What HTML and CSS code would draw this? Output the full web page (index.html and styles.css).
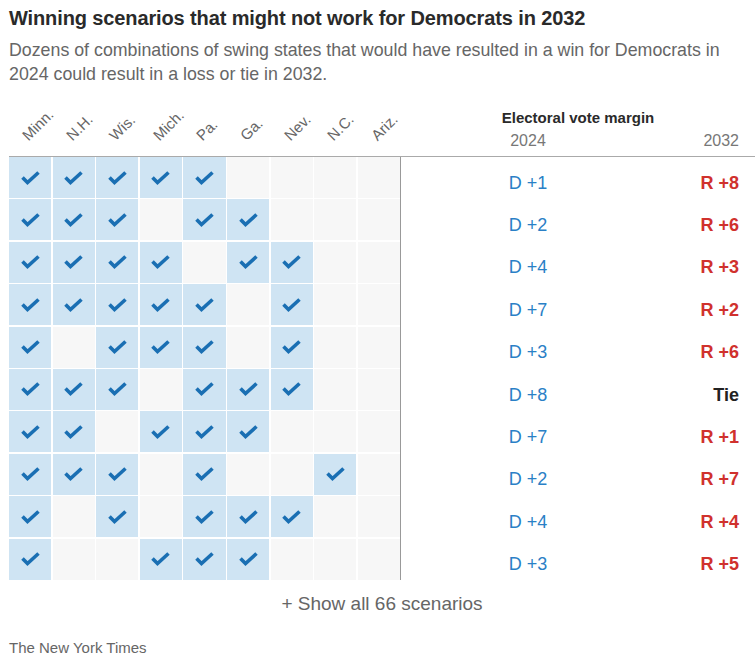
FILE: index.html
```html
<!DOCTYPE html>
<html lang="en">
<head>
<meta charset="utf-8">
<title>Winning scenarios</title>
<link rel="stylesheet" href="styles.css">
</head>
<body>
<div class="page">
  <h1 class="title">Winning scenarios that might not work for Democrats in 2032</h1>
  <p class="dek">Dozens of combinations of swing states that would have resulted in a win for Democrats in 2024 could result in a loss or tie in 2032.</p>

  <div class="chart">
    <div class="head">
      <div class="states">
        <div class="st"><span>Minn.</span></div>
        <div class="st"><span>N.H.</span></div>
        <div class="st"><span>Wis.</span></div>
        <div class="st"><span>Mich.</span></div>
        <div class="st"><span>Pa.</span></div>
        <div class="st"><span>Ga.</span></div>
        <div class="st"><span>Nev.</span></div>
        <div class="st"><span>N.C.</span></div>
        <div class="st"><span>Ariz.</span></div>
      </div>
      <div class="margin-head">
        <div class="mh-title">Electoral vote margin</div>
        <div class="years"><span class="y24">2024</span><span class="y32">2032</span></div>
      </div>
    </div>

    <div class="row">
      <div class="cells">
        <div class="c on"><svg viewBox="0 0 19 14"><path d="M1.5 6.5 L6.5 11.5 L17.5 1.5"/></svg></div>
        <div class="c on"><svg viewBox="0 0 19 14"><path d="M1.5 6.5 L6.5 11.5 L17.5 1.5"/></svg></div>
        <div class="c on"><svg viewBox="0 0 19 14"><path d="M1.5 6.5 L6.5 11.5 L17.5 1.5"/></svg></div>
        <div class="c on"><svg viewBox="0 0 19 14"><path d="M1.5 6.5 L6.5 11.5 L17.5 1.5"/></svg></div>
        <div class="c on"><svg viewBox="0 0 19 14"><path d="M1.5 6.5 L6.5 11.5 L17.5 1.5"/></svg></div>
        <div class="c"></div><div class="c"></div><div class="c"></div><div class="c"></div>
      </div>
      <div class="vals"><span class="d">D +1</span><span class="r">R +8</span></div>
    </div>

    <div class="row">
      <div class="cells">
        <div class="c on"><svg viewBox="0 0 19 14"><path d="M1.5 6.5 L6.5 11.5 L17.5 1.5"/></svg></div>
        <div class="c on"><svg viewBox="0 0 19 14"><path d="M1.5 6.5 L6.5 11.5 L17.5 1.5"/></svg></div>
        <div class="c on"><svg viewBox="0 0 19 14"><path d="M1.5 6.5 L6.5 11.5 L17.5 1.5"/></svg></div>
        <div class="c"></div>
        <div class="c on"><svg viewBox="0 0 19 14"><path d="M1.5 6.5 L6.5 11.5 L17.5 1.5"/></svg></div>
        <div class="c on"><svg viewBox="0 0 19 14"><path d="M1.5 6.5 L6.5 11.5 L17.5 1.5"/></svg></div>
        <div class="c"></div><div class="c"></div><div class="c"></div>
      </div>
      <div class="vals"><span class="d">D +2</span><span class="r">R +6</span></div>
    </div>

    <div class="row">
      <div class="cells">
        <div class="c on"><svg viewBox="0 0 19 14"><path d="M1.5 6.5 L6.5 11.5 L17.5 1.5"/></svg></div>
        <div class="c on"><svg viewBox="0 0 19 14"><path d="M1.5 6.5 L6.5 11.5 L17.5 1.5"/></svg></div>
        <div class="c on"><svg viewBox="0 0 19 14"><path d="M1.5 6.5 L6.5 11.5 L17.5 1.5"/></svg></div>
        <div class="c on"><svg viewBox="0 0 19 14"><path d="M1.5 6.5 L6.5 11.5 L17.5 1.5"/></svg></div>
        <div class="c"></div>
        <div class="c on"><svg viewBox="0 0 19 14"><path d="M1.5 6.5 L6.5 11.5 L17.5 1.5"/></svg></div>
        <div class="c on"><svg viewBox="0 0 19 14"><path d="M1.5 6.5 L6.5 11.5 L17.5 1.5"/></svg></div>
        <div class="c"></div><div class="c"></div>
      </div>
      <div class="vals"><span class="d">D +4</span><span class="r">R +3</span></div>
    </div>

    <div class="row">
      <div class="cells">
        <div class="c on"><svg viewBox="0 0 19 14"><path d="M1.5 6.5 L6.5 11.5 L17.5 1.5"/></svg></div>
        <div class="c on"><svg viewBox="0 0 19 14"><path d="M1.5 6.5 L6.5 11.5 L17.5 1.5"/></svg></div>
        <div class="c on"><svg viewBox="0 0 19 14"><path d="M1.5 6.5 L6.5 11.5 L17.5 1.5"/></svg></div>
        <div class="c on"><svg viewBox="0 0 19 14"><path d="M1.5 6.5 L6.5 11.5 L17.5 1.5"/></svg></div>
        <div class="c on"><svg viewBox="0 0 19 14"><path d="M1.5 6.5 L6.5 11.5 L17.5 1.5"/></svg></div>
        <div class="c"></div>
        <div class="c on"><svg viewBox="0 0 19 14"><path d="M1.5 6.5 L6.5 11.5 L17.5 1.5"/></svg></div>
        <div class="c"></div><div class="c"></div>
      </div>
      <div class="vals"><span class="d">D +7</span><span class="r">R +2</span></div>
    </div>

    <div class="row">
      <div class="cells">
        <div class="c on"><svg viewBox="0 0 19 14"><path d="M1.5 6.5 L6.5 11.5 L17.5 1.5"/></svg></div>
        <div class="c"></div>
        <div class="c on"><svg viewBox="0 0 19 14"><path d="M1.5 6.5 L6.5 11.5 L17.5 1.5"/></svg></div>
        <div class="c on"><svg viewBox="0 0 19 14"><path d="M1.5 6.5 L6.5 11.5 L17.5 1.5"/></svg></div>
        <div class="c on"><svg viewBox="0 0 19 14"><path d="M1.5 6.5 L6.5 11.5 L17.5 1.5"/></svg></div>
        <div class="c"></div>
        <div class="c on"><svg viewBox="0 0 19 14"><path d="M1.5 6.5 L6.5 11.5 L17.5 1.5"/></svg></div>
        <div class="c"></div><div class="c"></div>
      </div>
      <div class="vals"><span class="d">D +3</span><span class="r">R +6</span></div>
    </div>

    <div class="row">
      <div class="cells">
        <div class="c on"><svg viewBox="0 0 19 14"><path d="M1.5 6.5 L6.5 11.5 L17.5 1.5"/></svg></div>
        <div class="c on"><svg viewBox="0 0 19 14"><path d="M1.5 6.5 L6.5 11.5 L17.5 1.5"/></svg></div>
        <div class="c on"><svg viewBox="0 0 19 14"><path d="M1.5 6.5 L6.5 11.5 L17.5 1.5"/></svg></div>
        <div class="c"></div>
        <div class="c on"><svg viewBox="0 0 19 14"><path d="M1.5 6.5 L6.5 11.5 L17.5 1.5"/></svg></div>
        <div class="c on"><svg viewBox="0 0 19 14"><path d="M1.5 6.5 L6.5 11.5 L17.5 1.5"/></svg></div>
        <div class="c on"><svg viewBox="0 0 19 14"><path d="M1.5 6.5 L6.5 11.5 L17.5 1.5"/></svg></div>
        <div class="c"></div><div class="c"></div>
      </div>
      <div class="vals"><span class="d">D +8</span><span class="tie">Tie</span></div>
    </div>

    <div class="row">
      <div class="cells">
        <div class="c on"><svg viewBox="0 0 19 14"><path d="M1.5 6.5 L6.5 11.5 L17.5 1.5"/></svg></div>
        <div class="c on"><svg viewBox="0 0 19 14"><path d="M1.5 6.5 L6.5 11.5 L17.5 1.5"/></svg></div>
        <div class="c"></div>
        <div class="c on"><svg viewBox="0 0 19 14"><path d="M1.5 6.5 L6.5 11.5 L17.5 1.5"/></svg></div>
        <div class="c on"><svg viewBox="0 0 19 14"><path d="M1.5 6.5 L6.5 11.5 L17.5 1.5"/></svg></div>
        <div class="c on"><svg viewBox="0 0 19 14"><path d="M1.5 6.5 L6.5 11.5 L17.5 1.5"/></svg></div>
        <div class="c"></div><div class="c"></div><div class="c"></div>
      </div>
      <div class="vals"><span class="d">D +7</span><span class="r">R +1</span></div>
    </div>

    <div class="row">
      <div class="cells">
        <div class="c on"><svg viewBox="0 0 19 14"><path d="M1.5 6.5 L6.5 11.5 L17.5 1.5"/></svg></div>
        <div class="c on"><svg viewBox="0 0 19 14"><path d="M1.5 6.5 L6.5 11.5 L17.5 1.5"/></svg></div>
        <div class="c on"><svg viewBox="0 0 19 14"><path d="M1.5 6.5 L6.5 11.5 L17.5 1.5"/></svg></div>
        <div class="c"></div>
        <div class="c on"><svg viewBox="0 0 19 14"><path d="M1.5 6.5 L6.5 11.5 L17.5 1.5"/></svg></div>
        <div class="c"></div><div class="c"></div>
        <div class="c on"><svg viewBox="0 0 19 14"><path d="M1.5 6.5 L6.5 11.5 L17.5 1.5"/></svg></div>
        <div class="c"></div>
      </div>
      <div class="vals"><span class="d">D +2</span><span class="r">R +7</span></div>
    </div>

    <div class="row">
      <div class="cells">
        <div class="c on"><svg viewBox="0 0 19 14"><path d="M1.5 6.5 L6.5 11.5 L17.5 1.5"/></svg></div>
        <div class="c"></div>
        <div class="c on"><svg viewBox="0 0 19 14"><path d="M1.5 6.5 L6.5 11.5 L17.5 1.5"/></svg></div>
        <div class="c"></div>
        <div class="c on"><svg viewBox="0 0 19 14"><path d="M1.5 6.5 L6.5 11.5 L17.5 1.5"/></svg></div>
        <div class="c on"><svg viewBox="0 0 19 14"><path d="M1.5 6.5 L6.5 11.5 L17.5 1.5"/></svg></div>
        <div class="c on"><svg viewBox="0 0 19 14"><path d="M1.5 6.5 L6.5 11.5 L17.5 1.5"/></svg></div>
        <div class="c"></div><div class="c"></div>
      </div>
      <div class="vals"><span class="d">D +4</span><span class="r">R +4</span></div>
    </div>

    <div class="row last">
      <div class="cells">
        <div class="c on"><svg viewBox="0 0 19 14"><path d="M1.5 6.5 L6.5 11.5 L17.5 1.5"/></svg></div>
        <div class="c"></div><div class="c"></div>
        <div class="c on"><svg viewBox="0 0 19 14"><path d="M1.5 6.5 L6.5 11.5 L17.5 1.5"/></svg></div>
        <div class="c on"><svg viewBox="0 0 19 14"><path d="M1.5 6.5 L6.5 11.5 L17.5 1.5"/></svg></div>
        <div class="c on"><svg viewBox="0 0 19 14"><path d="M1.5 6.5 L6.5 11.5 L17.5 1.5"/></svg></div>
        <div class="c"></div><div class="c"></div><div class="c"></div>
      </div>
      <div class="vals"><span class="d">D +3</span><span class="r">R +5</span></div>
    </div>
  </div>

  <div class="more">+ Show all 66 scenarios</div>
  <div class="credit">The New York Times</div>
</div>
</body>
</html>
```

FILE: styles.css
```css
html, body {
  margin: 0;
  padding: 0;
  background: #fff;
}

.page {
  padding: 6px 0 0 9px;
  font-family: "Liberation Sans", Arial, sans-serif;
  color: #121212;
}

.title {
  margin: 0;
  font-family: "Liberation Sans", Arial, sans-serif;
  font-size: 20px;
  line-height: 25px;
  font-weight: 700;
  letter-spacing: -0.12px;
  color: #2a2a2a;
}

.dek {
  margin: 7px 0 0 0;
  font-size: 17.8px;
  line-height: 24px;
  color: #666;
  padding-right: 9px;
}

.head {
  display: grid;
  grid-template-columns: 392px 1fr;
  height: 70px;
  border-bottom: 1px solid #aaa;
}

.states {
  display: grid;
  grid-template-columns: repeat(9, minmax(0, 1fr));
  column-gap: 1.5px;
  padding-right: 1px;
}

.st {
  min-width: 0;
  display: flex;
  align-items: flex-end;
  padding: 0 0 13px 21px;
  overflow: visible;
}

.st span {
  display: inline-block;
  flex: none;
  font-size: 15px;
  line-height: 15px;
  color: #666;
  white-space: nowrap;
  transform: rotate(-45deg);
  transform-origin: 0 100%;
}

.margin-head {
  display: flex;
  flex-direction: column;
  justify-content: flex-end;
  padding-bottom: 5px;
}

.mh-title {
  text-align: center;
  font-size: 15px;
  line-height: 18px;
  font-weight: 700;
  color: #2a2a2a;
  margin-bottom: 4px;
}

.years,
.vals {
  display: grid;
  grid-template-columns: 254px 84px;
}

.years span {
  font-size: 16px;
  line-height: 20px;
  color: #777;
}

.y24, .d { text-align: center; }
.y32, .r, .tie { text-align: right; }

.row {
  display: grid;
  grid-template-columns: 392px 1fr;
}

.cells {
  display: grid;
  grid-template-columns: repeat(9, minmax(0, 1fr));
  column-gap: 1.5px;
  padding-bottom: 1.4px;
  border-right: 1px solid #999;
}

.row.last .cells {
  padding-bottom: 0;
}

.c {
  height: 41px;
  background: #f7f7f7;
  display: flex;
  align-items: center;
  justify-content: center;
}

.c.on {
  background: #cfe4f3;
}

.c svg {
  width: 19px;
  height: 14px;
  fill: none;
  stroke: #1a6fb3;
  stroke-width: 3.6;
}

.vals {
  align-items: center;
  padding-top: 9px;
  font-size: 18px;
  line-height: 24px;
}

.vals span {
  display: block;
}

.d { color: #2a80c6; }
.r { color: #d0312d; font-weight: 700; }
.tie { color: #222; font-weight: 700; }

.more {
  text-align: center;
  font-size: 19px;
  line-height: 24px;
  color: #666;
  margin-top: 12px;
}

.credit {
  margin-top: 22px;
  font-size: 15px;
  line-height: 20px;
  color: #666;
}
```
